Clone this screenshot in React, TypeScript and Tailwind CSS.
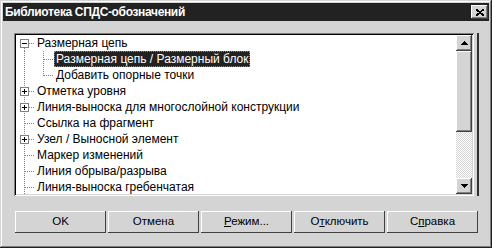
const font = "font-['Liberation_Sans',Arial,sans-serif]"

type Row = {
  label: string
  level: 0 | 1
  box?: "plus" | "minus"
  selected?: boolean
  first?: boolean
  lastChild?: boolean
}

const rows: Row[] = [
  { label: "Размерная цепь", level: 0, box: "minus", first: true },
  { label: "Размерная цепь / Размерный блок", level: 1, selected: true },
  { label: "Добавить опорные точки", level: 1, lastChild: true },
  { label: "Отметка уровня", level: 0, box: "plus" },
  { label: "Линия-выноска для многослойной конструкции", level: 0, box: "plus" },
  { label: "Ссылка на фрагмент", level: 0 },
  { label: "Узел / Выносной элемент", level: 0, box: "plus" },
  { label: "Маркер изменений", level: 0 },
  { label: "Линия обрыва/разрыва", level: 0 },
  { label: "Линия-выноска гребенчатая", level: 0 },
]

const dot = { stroke: "#808080", strokeWidth: 1, strokeDasharray: "1 1" }

function Gutter({ row }: { row: Row }) {
  const w = row.level === 0 ? 19 : 38
  return (
    <svg width={w} height={16} className="shrink-0" shapeRendering="crispEdges">
      {/* top level vertical line */}
      <line x1={8.5} y1={row.first ? 9 : 0} x2={8.5} y2={16} {...dot} />
      {row.level === 0 && <line x1={row.box ? 13 : 9} y1={8.5} x2={19} y2={8.5} {...dot} />}
      {row.level === 1 && (
        <>
          <line x1={27.5} y1={0} x2={27.5} y2={row.lastChild ? 9 : 16} {...dot} />
          <line x1={28} y1={8.5} x2={38} y2={8.5} {...dot} />
        </>
      )}
      {row.box && (
        <>
          <rect x={4.5} y={4.5} width={8} height={8} fill="#fff" stroke="#808080" />
          <line x1={6} y1={8.5} x2={11} y2={8.5} stroke="#000" />
          {row.box === "plus" && <line x1={8.5} y1={6} x2={8.5} y2={11} stroke="#000" />}
        </>
      )}
    </svg>
  )
}

function Arrow({ up }: { up?: boolean }) {
  return (
    <svg width="7" height="4" shapeRendering="crispEdges">
      <path d={up ? "M3.5 0 L7 4 L0 4 Z" : "M0 0 L7 0 L3.5 4 Z"} fill="#000" />
    </svg>
  )
}

const raised =
  "shadow-[inset_-1px_-1px_#404040,inset_1px_1px_#ffffff,inset_-2px_-2px_#808080]"

function Button({ children }: { children: React.ReactNode }) {
  return (
    <div
      className="w-[91px] h-[22px] flex items-center justify-center text-[11.5px] text-black bg-[#d4d4d4] shadow-[inset_-1px_-1px_#404040,inset_1px_1px_#ffffff]"
    >
      {children}
    </div>
  )
}

export default function App() {
  return (
    <div
      className={`w-[492px] h-[248px] bg-[#d4d4d4] p-[3px] flex flex-col ${font} shadow-[inset_-1px_-1px_#202020,inset_1px_1px_#d4d4d4,inset_-2px_-2px_#808080,inset_2px_2px_#ffffff]`}
    >
      <div className="h-[18px] bg-[#222222] flex items-center justify-between pl-[2px] pr-[1px]">
        <span className="text-white font-bold text-[12px] tracking-[-0.35px] leading-none">
          Библиотека СПДС-обозначений
        </span>
        <div className={`w-[17px] h-[14px] bg-[#d4d4d4] flex items-center justify-center ${raised}`}>
          <svg width="8" height="7" shapeRendering="crispEdges">
            <path d="M0 0 L8 7 M8 0 L0 7" stroke="#000" strokeWidth="1.8" />
          </svg>
        </div>
      </div>

      <div className="flex pt-[12px] pl-[11px]">
        <div className="w-[460px] h-[163px] flex bg-white shadow-[inset_1px_1px_#808080,inset_-1px_-1px_#ffffff,inset_2px_2px_#000000,inset_-2px_-2px_#d4d4d4] p-[2px]">
          <div className="flex-1 overflow-hidden">
            {rows.map((r) => (
              <div key={r.label} className="h-[16px] flex items-center">
                <Gutter row={r} />
                <span
                  className={`px-[2px] h-[16px] flex items-center text-[12px] whitespace-nowrap ${
                    r.selected
                      ? "bg-[#222222] text-white outline outline-dotted outline-1 -outline-offset-1 outline-[#888]"
                      : "text-black"
                  }`}
                >
                  {r.label}
                </span>
              </div>
            ))}
          </div>
          <div className="w-[16px] flex flex-col">
            <div className={`h-[16px] bg-[#d4d4d4] flex items-center justify-center ${raised}`}>
              <Arrow up />
            </div>
            <div className={`h-[81px] bg-[#d4d4d4] ${raised}`} />
            <div className="flex-1 bg-[image:repeating-conic-gradient(#ffffff_0_25%,#d4d4d4_0_50%)] bg-size-[2px_2px]" />
            <div className={`h-[16px] bg-[#d4d4d4] flex items-center justify-center ${raised}`}>
              <Arrow />
            </div>
          </div>
        </div>
        <div className="ml-[3px] w-[2px] h-[163px] bg-[#303030]" />
      </div>

      <div className="flex gap-[2px] pl-[12px] mt-[15px]">
        <Button>OK</Button>
        <Button>Отмена</Button>
        <Button>
          <span>
            <u>Р</u>ежим...
          </span>
        </Button>
        <Button>
          <span>
            О<u>т</u>ключить
          </span>
        </Button>
        <Button>
          <span>
            С<u>п</u>равка
          </span>
        </Button>
      </div>
    </div>
  )
}
